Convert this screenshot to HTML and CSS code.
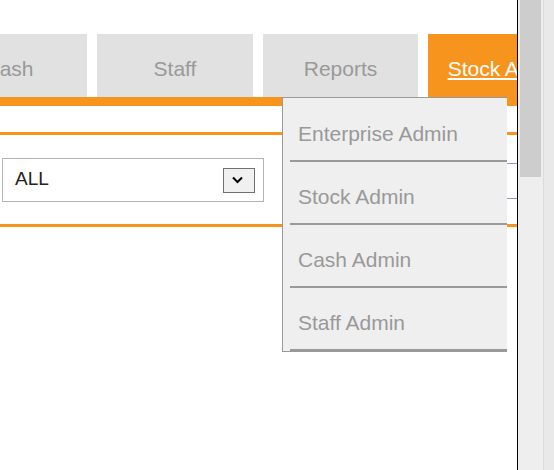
FILE: index.html
```html
<!DOCTYPE html>
<html lang="en">
<head>
    <meta charset="UTF-8" />
    <title>Stock Admin</title>
    <link rel="stylesheet" href="styles.css">
</head>
<body>
    <div class="janela">
        <div class="pagina">
            <nav class="abas">
                <a class="aba" href="#">Cash</a>
                <a class="aba" href="#">Staff</a>
                <a class="aba aba-reports" href="#">Reports</a>
                <a class="aba ativa" href="#">Stock Admin</a>
            </nav>
            <div class="barra-abas"></div>

            <div class="filtros">
                <div class="seletor">
                    <span>ALL</span>
                    <span class="seletor-botao">
                        <svg width="11" height="8" viewBox="0 0 11 8">
                            <path d="M1 1.5 L5.5 6 L10 1.5" fill="none" stroke="#000" stroke-width="2"/>
                        </svg>
                    </span>
                </div>
                <div class="busca"></div>
            </div>

            <!-- submenu aberto da aba Stock Admin -->
            <ul class="submenu">
                <li>Enterprise Admin</li>
                <li>Stock Admin</li>
                <li>Cash Admin</li>
                <li>Staff Admin</li>
            </ul>
        </div>
        <div class="rolagem">
            <div class="rolagem-trilho"><div class="rolagem-cursor"></div></div>
            <div class="rolagem-borda"></div>
        </div>
    </div>
</body>
</html>
```

FILE: styles.css
```css
body {
    margin: 0;
    font-family: "Liberation Sans", Arial, sans-serif;
    background-color: white;
}
.janela {
    display: flex;
    height: 470px;
}
.pagina {
    position: relative;
    flex: 0 0 517px;
    border-right: 1px solid #000;
    overflow: hidden;
}
.abas {
    display: flex;
    gap: 10px;
    margin-top: 34px;
    margin-left: -69px;
}
.aba {
    flex: 0 0 156px;
    height: 63px;
    box-sizing: border-box;
    padding-top: 6px;
    line-height: 57px;
    text-align: center;
    font-size: 21px;
    color: #999;
    background-color: #e1e1e1;
    text-decoration: none;
    white-space: nowrap;
}
.aba-reports {
    flex-basis: 155px;
}
.aba.ativa {
    background-color: #f7941d;
    color: white;
    text-decoration: underline;
}
.barra-abas {
    height: 9px;
    background-color: #f7941d;
}
.filtros {
    display: flex;
    align-items: flex-start;
    margin-top: 26px;
    padding: 23px 0 22px;
    border-top: 3px solid #f7941d;
    border-bottom: 3px solid #f7941d;
}
.seletor {
    display: flex;
    flex: 0 0 262px;
    align-items: center;
    box-sizing: border-box;
    height: 44px;
    margin-left: 2px;
    padding: 0 8px 2px 12px;
    border: 1px solid #b4b4b4;
    font-size: 19px;
    color: #222;
}
.seletor-botao {
    display: flex;
    align-items: center;
    justify-content: center;
    box-sizing: border-box;
    width: 32px;
    height: 25px;
    margin-left: auto;
    margin-top: 2px;
    padding-right: 4px;
    border: 1px solid #707070;
    background-color: #f0f0f0;
}
.busca {
    flex: 0 0 260px;
    height: 36px;
    box-sizing: border-box;
    margin: 5px 0 0 26px;
    border: 1px solid #7f9db9;
}
.submenu {
    position: absolute;
    top: 97px;
    left: 282px;
    width: 225px;
    box-sizing: border-box;
    margin: 0;
    padding: 1px 0 0 7px;
    list-style: none;
    background-color: #efefef;
    border: 1px solid #999;
    border-right: none;
}
.submenu li {
    padding: 23px 0 14px 8px;
    line-height: 24px;
    font-size: 21px;
    color: #999;
    border-bottom: 2px solid #999;
}
.rolagem {
    display: flex;
    flex: 1;
}
.rolagem-trilho {
    width: 25px;
    padding-left: 2px;
    box-sizing: border-box;
    background-color: #eeeeee;
}
.rolagem-cursor {
    width: 21px;
    height: 177px;
    background-color: #cdcdcd;
}
.rolagem-borda {
    flex: 1;
    border-left: 1px solid #dcdcdc;
    background-color: #e9e9e9;
}
```
